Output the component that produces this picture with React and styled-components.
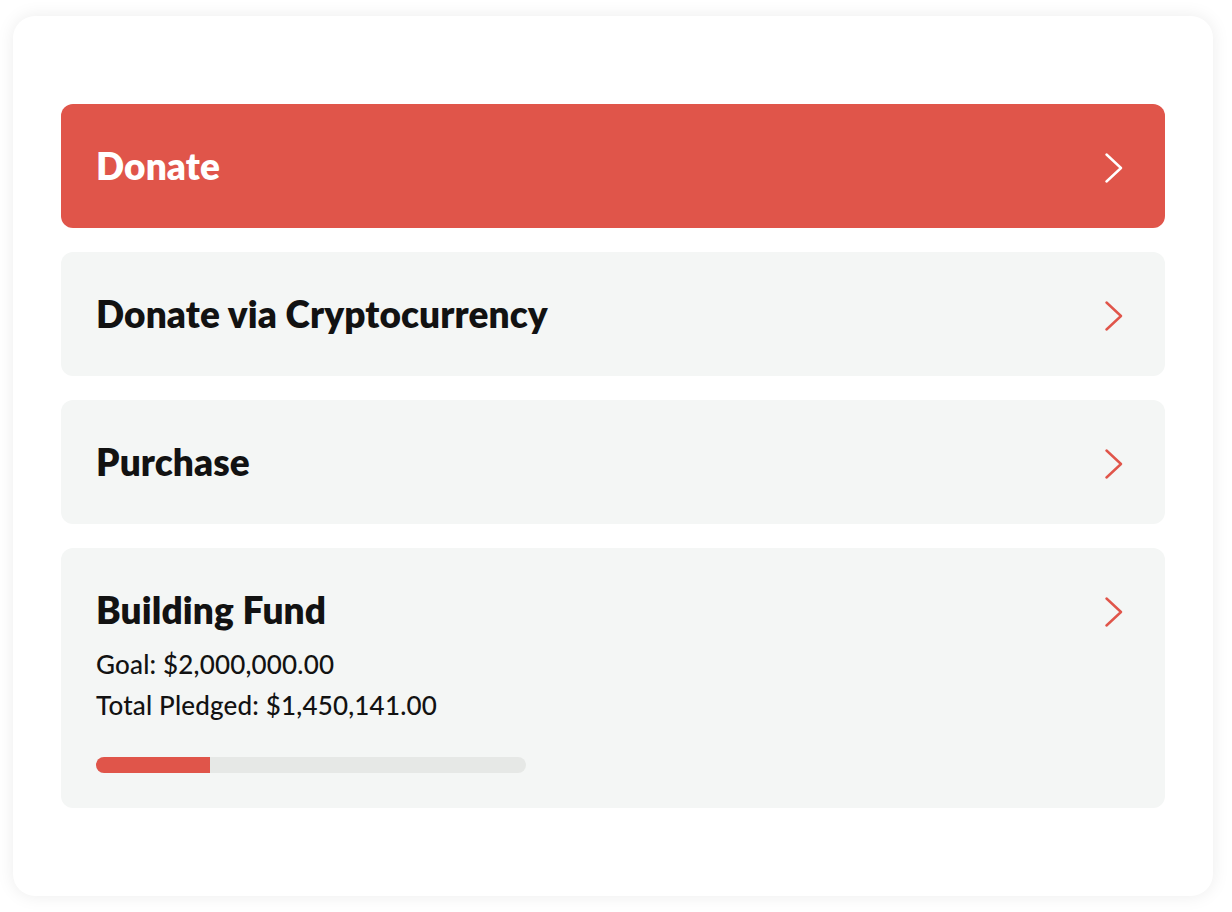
import React from "react";
import styled, { createGlobalStyle } from "styled-components";

const Global = createGlobalStyle`
  html, body { margin: 0; padding: 0; background: #ffffff; }
  body { font-family: "Lato", "Inter", "Liberation Sans", sans-serif; color: #121212; }
`;

const Page = styled.div`
  padding: 16px 19px 16px 13px;
`;

const Card = styled.div`
  background: #ffffff;
  border-radius: 22px;
  box-shadow: 0 0 18px rgba(0, 0, 0, 0.08);
  padding: 88px 48px;
  display: flex;
  flex-direction: column;
  gap: 24px;
`;

const Row = styled.div`
  display: flex;
  align-items: ${(p) => (p.$top ? "flex-start" : "center")};
  justify-content: space-between;
  min-height: 124px;
  box-sizing: border-box;
  padding: ${(p) => (p.$top ? "40px 34px 35px 35px" : "0 34px 0 35px")};
  border-radius: 12px;
  background: ${(p) => (p.$primary ? "#E0554A" : "#F4F6F5")};
  color: ${(p) => (p.$primary ? "#ffffff" : "#121212")};
`;

const Body = styled.div`
  display: flex;
  flex-direction: column;
`;

const Title = styled.div`
  font-size: 37px;
  font-weight: 800;
  line-height: 44px;
  letter-spacing: 0.1px;
`;

const Detail = styled.div`
  font-size: 26px;
  font-weight: 500;
  line-height: 41px;
  letter-spacing: 0.18px;
`;

const Details = styled.div`
  margin-top: 12px;
`;

const Track = styled.div`
  margin-top: 31px;
  width: 430px;
  height: 16px;
  border-radius: 8px;
  background: #E6E8E6;
  overflow: hidden;
`;

const Fill = styled.div`
  height: 100%;
  background: #E0554A;
`;

const Chevron = styled.svg`
  flex: none;
  width: 18px;
  height: 30px;
  margin-right: 8px;
  margin-top: ${(p) => (p.$top ? "9px" : "4px")};
`;

function Arrow({ color, top }) {
  return (
    <Chevron $top={top} viewBox="0 0 18 30" fill="none">
      <path d="M1.5 1.5 L16 15 L1.5 28.5" stroke={color} strokeWidth="2.4" strokeLinecap="round" strokeLinejoin="round" />
    </Chevron>
  );
}

export default function App() {
  const pct = 26.5;
  return (
    <Page>
      <Global />
      <Card>
        <Row $primary>
          <Title>Donate</Title>
          <Arrow color="#ffffff" />
        </Row>
        <Row>
          <Title>Donate via Cryptocurrency</Title>
          <Arrow color="#E0554A" />
        </Row>
        <Row>
          <Title>Purchase</Title>
          <Arrow color="#E0554A" />
        </Row>
        <Row $top>
          <Body>
            <Title>Building Fund</Title>
            <Details>
              <Detail>Goal: $2,000,000.00</Detail>
              <Detail>Total Pledged: $1,450,141.00</Detail>
            </Details>
            <Track>
              <Fill style={{ width: `${pct}%` }} />
            </Track>
          </Body>
          <Arrow color="#E0554A" top />
        </Row>
      </Card>
    </Page>
  );
}
